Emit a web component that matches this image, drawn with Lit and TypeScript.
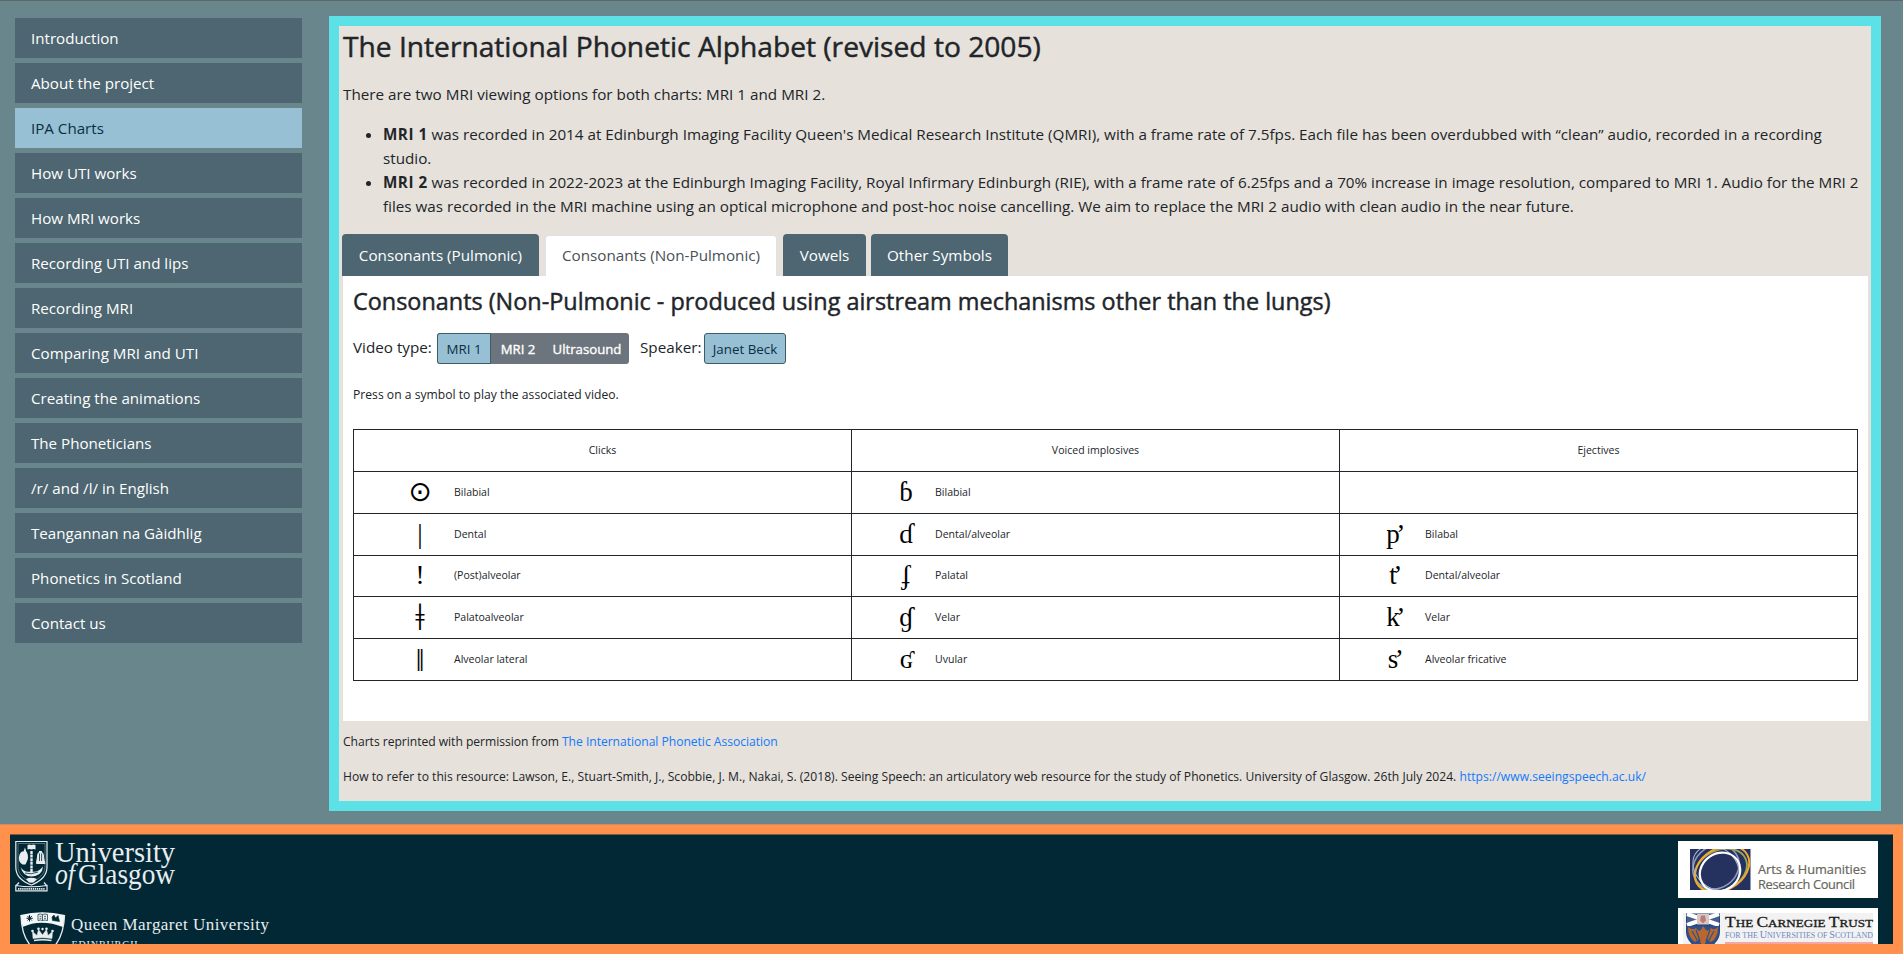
import { LitElement, html, css, svg, nothing } from 'lit';
import { customElement, state } from 'lit/decorators.js';
import { classMap } from 'lit/directives/class-map.js';

const NAV = [
  'Introduction', 'About the project', 'IPA Charts', 'How UTI works', 'How MRI works',
  'Recording UTI and lips', 'Recording MRI', 'Comparing MRI and UTI', 'Creating the animations',
  'The Phoneticians', '/r/ and /l/ in English', 'Teangannan na Gàidhlig', 'Phonetics in Scotland', 'Contact us',
];

const TABS = ['Consonants (Pulmonic)', 'Consonants (Non-Pulmonic)', 'Vowels', 'Other Symbols'];

type Entry = { s: string; label: string; kind?: string } | null;
const ROWS: Entry[][] = [
  [{ s: '⊙', label: 'Bilabial', kind: 'circle' }, { s: 'ɓ', label: 'Bilabial' }, null],
  [{ s: '|', label: 'Dental' }, { s: 'ɗ', label: 'Dental/alveolar' }, { s: 'p’', label: 'Bilabal', kind: 'ejective' }],
  [{ s: '!', label: '(Post)alveolar' }, { s: 'ʄ', label: 'Palatal' }, { s: 't’', label: 'Dental/alveolar', kind: 'ejective' }],
  [{ s: 'ǂ', label: 'Palatoalveolar', kind: 'bar' }, { s: 'ɠ', label: 'Velar' }, { s: 'k’', label: 'Velar', kind: 'ejective' }],
  [{ s: '‖', label: 'Alveolar lateral', kind: 'dbl' }, { s: 'ʛ', label: 'Uvular' }, { s: 's’', label: 'Alveolar fricative', kind: 'ejective' }],
];

@customElement('ipa-table')
export class IpaTable extends LitElement {
  static styles = css`
    :host { display: block; }
    table { width: 1505px; table-layout: fixed; border-collapse: collapse; font-size: 10.55px; line-height: 16px; }
    th, td { border: 1px solid #212529; padding: 0; height: 41px; font-weight: 400; text-align: center; }
    th { height: 39px; padding-bottom: 2px; }
    tr.short td { height: 40px; }
    .c0 { width: 497px; }
    .c1 { width: 487px; }
    .entry { display: flex; align-items: center; height: 40px; text-align: left; }
    .label { padding-bottom: 1.5px; }
    .sym { width: 40px; text-align: center; flex: none; white-space: nowrap; color: #000;
      font: 27px/39px "Liberation Serif", "DejaVu Serif", serif; height: 40px; }
    .sym.circle { font: 28px/37px "DejaVu Sans", sans-serif; }
    .sym.bar { font-size: 38px; line-height: 39px; }
    .sym.dbl { font-size: 31px; line-height: 42px; }
    .sym.ejective { letter-spacing: -3.5px; }
    td:nth-child(1) .entry { padding-left: 46px; gap: 14px; }
    td:nth-child(2) .entry { padding-left: 34px; gap: 9px; }
    td:nth-child(3) .entry { padding-left: 34px; gap: 11px; }
  `;
  render() {
    return html`<table>
      <tr><th class="c0">Clicks</th><th class="c1">Voiced implosives</th><th>Ejectives</th></tr>
      ${ROWS.map((r, i) => html`<tr class=${i === 2 ? 'short' : ''}>${r.map(e => html`<td>${e
        ? html`<div class="entry"><span class="sym ${e.kind ?? ''}">${e.s}</span><span class="label">${e.label}</span></div>`
        : nothing}</td>`)}</tr>`)}
    </table>`;
  }
}

@customElement('partner-logos')
export class PartnerLogos extends LitElement {
  static styles = css`
    :host { display: flex; justify-content: space-between; align-items: flex-start; height: 100%; overflow: hidden; }
    .left { display: flex; flex-direction: column; gap: 18px; padding: 5px 0 0 5px; }
    .right { display: flex; flex-direction: column; gap: 10px; padding: 6px 15px 0 0; }
    svg { display: block; }
    .serif { font-family: "Liberation Serif", serif; }
    .sans { font-family: "Open Sans", sans-serif; }
  `;
  glasgow = svg`<svg width="165" height="52" viewBox="0 0 165 52" fill="none" stroke="#e8edef">
    <path d="M.8 1.5H32V27C32 36 24 42 16.400 45C8 42 .8 36 .8 27Z" stroke-width="1.200"/>
    <path d="M3 3.500H30V27C30 34 23 39.500 16.400 42.500C9.500 39.500 3 34 3 27Z" stroke-width=".5" opacity=".7"/>
    <path d="M12.500 5Q14.500 4 16.400 5Q18.500 4 20.500 5V9.500Q18.500 8.500 16.400 9.500Q14.500 8.500 12.500 9.500Z" fill="#e8edef" stroke="none"/>
    <path d="M16.500 11V35" stroke-width="2.400" stroke-dasharray="3 .6"/>
    <path d="M4 17Q5 11 8.500 11.500L10 7.500L11 11Q14 15 12.500 20L10.500 24.500H7.500Q3 22 4 17Z" fill="#e8edef" stroke="none"/>
    <path d="M21.500 23.500Q22 19 22.500 17Q22.500 12 25.500 12Q28.500 12 28.500 17Q28.800 20 30 23.500ZM24 11.500h3" fill="#e8edef" stroke-width="1"/>
    <path d="M24.500 13.500V21M26.600 13.500V21" stroke="#022836" stroke-width=".8"/>
    <path d="M5.500 27Q9 33 16 31.500Q23 33 28 26.500Q27.500 35.500 16.500 36.500Q8 36.500 5.500 27Z" fill="#e8edef" stroke="none"/>
    <path d="M10 33Q16 35 23 32M12 39.500Q16 36 21 39.500" stroke="#022836" stroke-width=".8"/>
    <path d="M11 39Q16 36.500 22 39L18.500 42.500H14Z" fill="#e8edef" stroke="none"/>
    <path d="M.8 50.500V46L4 42.500M32 50.500V46L29 42.500M.8 45.500Q16 48 32 45.500V50.800H.8Z" stroke-width="1.200"/>
    <path d="M3 48.800H30" stroke-width="1.800" stroke-dasharray="1.400 .7"/>
    <g class="serif" fill="#e8edef" stroke="none" font-size="29">
      <text x="40" y="21.500" textLength="120" lengthAdjust="spacingAndGlyphs">University</text>
      <text x="40" y="44" font-style="italic" textLength="20" lengthAdjust="spacingAndGlyphs">of</text>
      <text x="63" y="44" textLength="97" lengthAdjust="spacingAndGlyphs">Glasgow</text>
    </g></svg>`;
  qmu = svg`<svg width="260" height="60" viewBox="0 0 260 60" fill="none" stroke="#e8edef">
    <path d="M5.500 5Q27 -.5 50 5L48 17Q26 8.500 7.500 17Z" fill="#f4f7f8" stroke="none"/>
    <path d="M6 5Q6.500 28 18 38H38Q49 26 49.500 5" stroke-width="1.300"/>
    <path d="M14.500 5V11.500M11.500 8.300H17.800M12.500 6L16.800 10.500M16.800 6L12.500 10.500" stroke="#022836" stroke-width="1"/>
    <path d="M23 4.500Q25.500 3.500 27.500 4.500Q30 3.500 32.500 4.500V10.500Q30 9.500 27.500 10.500Q25.500 9.500 23 10.500ZM27.500 4.500V10.500M24.500 6.300h2M24.500 8.300h2M29 6.300h2M29 8.300h2" stroke="#022836" stroke-width=".7"/>
    <path d="M37 7L39 5L40.500 8L43 5.500L44.500 11.500L37.500 10.500Z" fill="#022836" stroke="#022836" stroke-width=".6"/>
    <path d="M18 28.500L17.500 21.500L22 25.500L23.500 19.500L27.500 25L31.500 19.500L33 25.500L37.500 21.500L37 28.500Q27.500 27 18 28.500Z" fill="#e8edef" stroke-width=".5"/>
    <path d="M19 30.500Q27.500 29 36.500 30.500" stroke-width="1.500"/>
    <g fill="#e8edef" stroke="none"><circle cx="17.500" cy="21" r="1.300"/><circle cx="23.500" cy="18.800" r="1.300"/><circle cx="31.500" cy="18.800" r="1.300"/><circle cx="37.500" cy="21" r="1.300"/><circle cx="27.500" cy="19" r="1.200"/></g>
    <g class="serif" fill="#e8edef" stroke="none">
      <text x="56" y="20" font-size="17" textLength="198">Queen Margaret University</text>
      <text x="56.500" y="37.500" font-size="10" textLength="66">EDINBURGH</text>
    </g></svg>`;
  ahrc = svg`<svg width="200" height="57" viewBox="0 0 200 57" fill="none">
    <defs><clipPath id="sq"><rect x="12" y="8" width="61" height="41"/></clipPath></defs>
    <rect width="200" height="57" fill="#fff"/>
    <rect x="12" y="8" width="60.500" height="41" fill="#25315f"/>
    <g clip-path="url(#sq)">
      <ellipse cx="38" cy="26" rx="24" ry="21" stroke="#8f9bbd" stroke-width="1.600" transform="rotate(-35 38 26)"/>
      <ellipse cx="43" cy="29" rx="27" ry="20" stroke="#9aa757" stroke-width="1.800" transform="rotate(-25 43 29)"/>
      <ellipse cx="44" cy="28" rx="29" ry="21" stroke="#f0a92e" stroke-width="2" transform="rotate(-30 44 28)"/>
      <ellipse cx="38" cy="27" rx="25" ry="20" stroke="#a9b4cf" stroke-width="1" transform="rotate(40 38 27)"/>
      <ellipse cx="42" cy="31" rx="21" ry="18.500" stroke="#fff" stroke-width="2.200" transform="rotate(-35 42 31)"/>
    </g>
    <g class="sans" fill="#67665a" font-size="12.800" stroke="#67665a" stroke-width=".2">
      <text x="80" y="33" textLength="108">Arts &amp; Humanities</text>
      <text x="80" y="48" textLength="97">Research Council</text>
    </g></svg>`;
  carnegie = svg`<svg width="200" height="60" viewBox="0 0 200 60">
    <rect width="200" height="60" fill="#fff"/><rect x="5" y="5" width="190" height="55" fill="#f2f2f2"/>
    <path d="M8 5.500H42V24Q42 35 25 44Q8 35 8 24Z" fill="#27477c"/>
    <path d="M9 6.500H41V16H9Z" fill="#4b5f8e"/>
    <path d="M9 6L41 17M41 6L9 17" stroke="#fff" stroke-width="4"/>
    <path d="M19 6h12v10.500H19Z" fill="#dcc6c2"/><path d="M23 7.500h4l1 5-3 3-3-3Z" fill="#b97d78"/>
    <path d="M9 18H41V24Q41 34 25 43Q9 34 9 24Z" fill="#31508a"/>
    <path d="M10 19Q15 23 18 20Q20 24 23 22L25 18L28 22Q31 24 33 20Q36 23 40 19Q40 30 33 34L29 31L25 40L21 31L17 34Q10 29 10 19Z" fill="#b8682c"/>
    <path d="M14 23L19 32M18 22L22 33M36 23L31 32M32 22L28 33" stroke="#31508a" stroke-width="1.200"/>
    <g class="serif">
      <text x="47" y="19" fill="#1b1b1b" stroke="#1b1b1b" stroke-width=".3" font-size="10.500" textLength="148" lengthAdjust="spacingAndGlyphs"><tspan font-size="14">T</tspan>HE <tspan font-size="14">C</tspan>ARNEGIE <tspan font-size="14">T</tspan>RUST</text>
      <text x="47" y="30" fill="#6f86bd" font-size="7.800" textLength="148" lengthAdjust="spacingAndGlyphs">FOR THE <tspan font-size="10">U</tspan>NIVERSITIES OF <tspan font-size="10">S</tspan>COTLAND</text>
    </g>
    <rect x="47" y="34" width="148" height="2.500" fill="#f0a9a6"/></svg>`;
  render() {
    return html`<div class="left">${this.glasgow}${this.qmu}</div><div class="right">${this.ahrc}${this.carnegie}</div>`;
  }
}

@customElement('app-root')
export class AppRoot extends LitElement {
  @state() page = 2;
  @state() tab = 1;
  static styles = css`
    :host { display: flex; flex-direction: column; box-sizing: border-box; height: 954px; overflow: hidden;
      background: #69868d; border-top: 1px solid #62666a; color: #212529;
      font: 15.22px/24px "Open Sans", "Noto Sans", sans-serif; }
    *, *::before { box-sizing: border-box; }
    .body { display: flex; align-items: flex-start; gap: 27px; padding: 15px 22px 0 15px; height: 823px; flex: none; }
    nav { width: 287px; display: flex; flex-direction: column; gap: 5px; padding-top: 2px; flex: none; }
    nav a { height: 40px; line-height: 40px; padding-left: 16px; background: #4d6671; color: #fff; font-size: 15.15px; }
    nav a.on { background: #97c0d5; color: #0b2f40; }
    main { flex: 1; min-width: 0; height: 795px; border: 10px solid #5ce1e6; background: #e6e1da; padding: 3px 3px 0 4px; white-space: nowrap; }
    h1, h2 { font-weight: 400; -webkit-text-stroke: .45px #212529; }
    h1 { margin: 0 0 19px; font-size: 28.16px; line-height: 34px; }
    p { margin: 0 0 16px; letter-spacing: .02px; }
    ul { margin: 0 0 16px; padding-left: 40px; }
    strong { letter-spacing: .5px; }
    .tabs { display: flex; height: 42px; border-bottom: 1px solid #dee2e6; margin-left: -1px; }
    .tabs a { height: 42px; line-height: 42px; text-align: center; color: #fff; background: #4d6671; border-radius: 4px 4px 0 0; margin-right: 5px; }
    .tabs .t0 { width: 197px; margin-right: 6px; }
    .tabs .t1 { width: 232px; }
    .tabs .t2 { width: 83px; }
    .tabs .t3 { width: 137px; }
    .tabs a.on { background: #fff; color: #495057; border: 1px solid #dee2e6; border-bottom: 0; height: 41px; margin-top: 1px; line-height: 39px; margin-right: 6px; }
    .panel { background: #fff; height: 445px; padding: 11px 10px 0; }
    h2 { margin: 0 0 17px; font-size: 23.42px; line-height: 29px; }
    .controls { display: flex; height: 31px; line-height: 29px; align-items: stretch; margin-bottom: 21px; }
    .group { display: flex; margin: 0 11px 0 4px; font-size: 13.2px; color: #fff; background: #6c757d; border-radius: 3px; width: 192px; }
    .group b { font-weight: 400; -webkit-text-stroke: .35px #fff; font-size: 13.2px; text-align: center; line-height: 32px; }
    .group .on, .solo { background: #97c0d5; border: 1px solid #3f5b66; color: #0b2f40; font-weight: 400; line-height: 30px; font-size: 13.35px; text-align: center; -webkit-text-stroke: 0; }
    .group .on { width: 54px; border-radius: 3px 0 0 3px; }
    .group .m2 { width: 54px; }
    .group .us { flex: 1; }
    .solo { width: 82px; border-radius: 3px; margin-left: 4px; }
    .vt { width: 80px; }
    .sp { width: 60px; }
    .hint { font-size: 12.12px; line-height: 20px; margin-bottom: 24px; }
    .note { font-size: 12.12px; line-height: 19px; margin: 11px 0 16px; letter-spacing: -.03px; }
    .cite { letter-spacing: .01px; }
    .note a { color: #127afc; }
    footer { flex: 1; background: #ff914d; border-top: 1px solid #c58e70; padding: 9px 10px 10px; min-height: 0; }
    .inner { height: 110px; background: #022836; border-top: 1px solid #7c5a45; overflow: hidden; }
  `;
  render() {
    return html`
      <div class="body">
        <nav>${NAV.map((n, i) => html`<a class=${classMap({ on: i === this.page })} @click=${() => (this.page = i)}>${n}</a>`)}</nav>
        <main>
          <h1>The International Phonetic Alphabet (revised to 2005)</h1>
          <p>There are two MRI viewing options for both charts: MRI 1 and MRI 2.</p>
          <ul>
            <li><strong>MRI 1</strong> was recorded in 2014 at Edinburgh Imaging Facility Queen's Medical Research Institute (QMRI), with a frame rate of 7.5fps. Each file has been overdubbed with “clean” audio, recorded in a recording<br>studio.</li>
            <li><strong>MRI 2</strong> was recorded in 2022-2023 at the Edinburgh Imaging Facility, Royal Infirmary Edinburgh (RIE), with a frame rate of 6.25fps and a 70% increase in image resolution, compared to MRI 1. Audio for the MRI 2<br>files was recorded in the MRI machine using an optical microphone and post-hoc noise cancelling. We aim to replace the MRI 2 audio with clean audio in the near future.</li>
          </ul>
          <div class="tabs">${TABS.map((t, i) => html`<a class="t${i} ${i === this.tab ? 'on' : ''}" @click=${() => (this.tab = i)}>${t}</a>`)}</div>
          <section class="panel">
            <h2>Consonants (Non-Pulmonic - produced using airstream mechanisms other than the lungs)</h2>
            <div class="controls">
              <span class="vt">Video type:</span>
              <div class="group"><b class="on">MRI 1</b><b class="m2">MRI 2</b><b class="us">Ultrasound</b></div>
              <span class="sp">Speaker:</span><span class="solo">Janet Beck</span>
            </div>
            <p class="hint">Press on a symbol to play the associated video.</p>
            <ipa-table></ipa-table>
          </section>
          <p class="note">Charts reprinted with permission from <a>The International Phonetic Association</a></p>
          <p class="note cite">How to refer to this resource: Lawson, E., Stuart-Smith, J., Scobbie, J. M., Nakai, S. (2018). Seeing Speech: an articulatory web resource for the study of Phonetics. University of Glasgow. 26th July 2024. <a>https://www.seeingspeech.ac.uk/</a></p>
        </main>
      </div>
      <footer><div class="inner"><partner-logos></partner-logos></div></footer>`;
  }
}
